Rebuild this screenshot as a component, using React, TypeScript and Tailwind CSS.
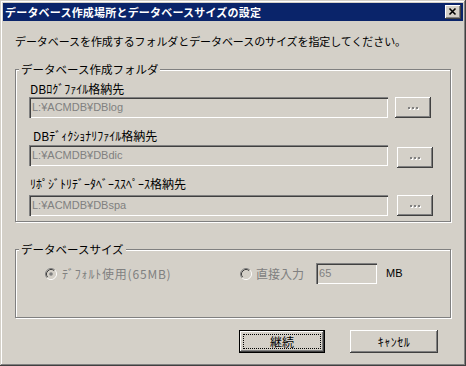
const jp = "font-['Noto_Sans_CJK_JP',sans-serif]";
const lat = "font-['Liberation_Sans','Noto_Sans_CJK_JP',sans-serif]";

function Radio({ checked }: { checked?: boolean }) {
  return (
    <svg width="12" height="12" viewBox="0 0 12 12" className="shrink-0">
      <circle cx="6" cy="6" r="5.5" fill="#d4d0c8" />
      <path d="M2.11 9.89 A5.5 5.5 0 0 1 9.89 2.11" stroke="#808080" fill="none" />
      <path d="M9.89 2.11 A5.5 5.5 0 0 1 2.11 9.89" stroke="#ffffff" fill="none" />
      <path d="M2.82 9.18 A4.5 4.5 0 0 1 9.18 2.82" stroke="#404040" fill="none" />
      <path d="M9.18 2.82 A4.5 4.5 0 0 1 2.82 9.18" stroke="#d4d0c8" fill="none" />
      {checked && <circle cx="6" cy="6" r="1.8" fill="#808080" />}
    </svg>
  );
}

function Dots() {
  return (
    <div className="flex gap-[2px]">
      <span className="w-[2px] h-[2px] bg-[#808080] shadow-[1px_1px_#fff]" />
      <span className="w-[2px] h-[2px] bg-[#808080] shadow-[1px_1px_#fff]" />
      <span className="w-[2px] h-[2px] bg-[#808080] shadow-[1px_1px_#fff]" />
    </div>
  );
}

const sunken =
  "shadow-[inset_1px_1px_#808080,inset_2px_2px_#404040,inset_-1px_-1px_#fff,inset_-2px_-2px_#d4d0c8]";
const raised =
  "shadow-[inset_-1px_-1px_#404040,inset_1px_1px_#fff,inset_-2px_-2px_#808080,inset_2px_2px_#d4d0c8]";
const etched =
  "border border-[#808080] shadow-[inset_1px_1px_#fff,1px_1px_#fff]";

function PathInput({ value }: { value: string }) {
  return (
    <div
      className={`w-[359px] h-[21px] bg-[#d4d0c8] ${sunken} flex items-center pl-[3px] text-[11px] text-[#808080] ${lat}`}
    >
      {value}
    </div>
  );
}

function DotButton({ className = "" }: { className?: string }) {
  return (
    <div
      className={`w-[36px] h-[21px] bg-[#d4d0c8] ${raised} flex items-center justify-center ${className}`}
    >
      <Dots />
    </div>
  );
}

export default function App() {
  return (
    <div
      className={`w-[466px] h-[366px] bg-[#d4d0c8] p-[3px] flex flex-col text-black ${jp} shadow-[inset_-1px_-1px_#404040,inset_1px_1px_#d4d0c8,inset_-2px_-2px_#808080,inset_2px_2px_#fff]`}
    >
      {/* title bar */}
      <div className="h-[18px] bg-[#0a246a] flex items-center pl-[2px] pr-[2px] shrink-0">
        <span className="text-white font-bold text-[11px] leading-[18px] tracking-[0.2px]">
          データベース作成場所とデータベースサイズの設定
        </span>
        <div
          className={`ml-auto w-[16px] h-[14px] bg-[#d4d0c8] ${raised} flex items-center justify-center`}
        >
          <svg width="16" height="14" viewBox="0 0 16 14">
            <path d="M4.5 3.5 L10.5 9.5 M10.5 3.5 L4.5 9.5" stroke="#000" strokeWidth="1.6" />
          </svg>
        </div>
      </div>

      {/* body */}
      <div className="flex flex-col pl-[12px]">
        <div className="mt-[13px] h-[14px] leading-[14px] text-[11px] tracking-[-0.08px]">
          データベースを作成するフォルダとデータベースのサイズを指定してください。
        </div>

        {/* group 1 */}
        <div className={`relative mt-[21px] w-[436px] h-[153px] ${etched} flex flex-col pl-[13px]`}>
          <span className="absolute left-[3px] top-[-8px] px-[2px] bg-[#d4d0c8] text-[11.5px] leading-[14px]">
            データベース作成フォルダ
          </span>
          <div className="mt-[12px] h-[14px] leading-[14px] text-[12px] pl-[1px]">DBﾛｸﾞﾌｧｲﾙ格納先</div>
          <div className="mt-[1px] flex items-start">
            <PathInput value="L:¥ACMDB¥DBlog" />
            <DotButton className="ml-[7px]" />
          </div>
          <div className="mt-[11px] h-[14px] leading-[14px] text-[12px] pl-[4px]">DBﾃﾞｨｸｼｮﾅﾘﾌｧｲﾙ格納先</div>
          <div className="mt-[2px] flex items-start">
            <PathInput value="L:¥ACMDB¥DBdic" />
            <DotButton className="ml-[9px] mt-[2px]" />
          </div>
          <div className="mt-[9px] h-[14px] leading-[14px] text-[12px] pl-[1px]">ﾘﾎﾟｼﾞﾄﾘﾃﾞｰﾀﾍﾞｰｽｽﾍﾟｰｽ格納先</div>
          <div className="mt-[4px] flex items-start">
            <PathInput value="L:¥ACMDB¥DBspa" />
            <DotButton className="ml-[9px]" />
          </div>
        </div>

        {/* group 2 */}
        <div className={`relative mt-[27px] w-[436px] h-[69px] ${etched} flex flex-col pl-[29px]`}>
          <span className="absolute left-[3px] top-[-8px] px-[2px] bg-[#d4d0c8] text-[11.5px] leading-[14px]">
            データベースサイズ
          </span>
          <div className="mt-[13px] flex items-center h-[21px]">
            <div className="w-[195px] flex items-center">
              <Radio checked />
              <span className="ml-[5px] text-[12px] tracking-[0.8px] text-[#808080]">ﾃﾞﾌｫﾙﾄ使用(65MB)</span>
            </div>
            <Radio />
            <span className="ml-[4px] text-[12px] text-[#808080]">直接入力</span>
            <div
              className={`ml-[12px] w-[61px] h-[21px] bg-[#d4d0c8] ${sunken} flex items-center pl-[3px] text-[11px] text-[#808080] ${lat}`}
            >
              65
            </div>
            <span className={`ml-[9px] text-[11px] ${lat}`}>MB</span>
          </div>
        </div>

        {/* buttons */}
        <div className="mt-[12px] flex pl-[224px] gap-[25px]">
          <div className="w-[86px] h-[23px] border border-black bg-[#d4d0c8]">
            <div className={`relative w-full h-full ${raised} flex items-center justify-center text-[12px]`}>
              <div className="absolute inset-[3px] border border-dotted border-black" />
              継続
            </div>
          </div>
          <div className={`w-[88px] h-[23px] bg-[#d4d0c8] ${raised} flex items-center justify-center text-[12px] tracking-[0.5px]`}>
            ｷｬﾝｾﾙ
          </div>
        </div>
      </div>
    </div>
  );
}
